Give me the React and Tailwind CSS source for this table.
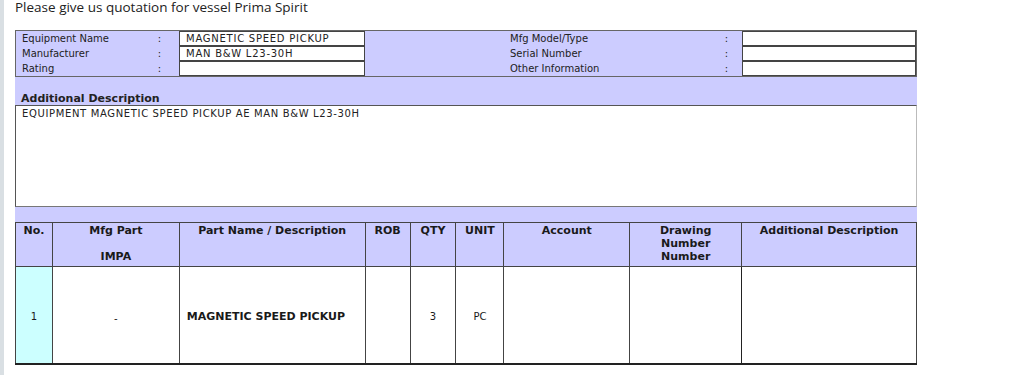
const infoRows = [
  ["Equipment Name", "MAGNETIC SPEED PICKUP", "Mfg Model/Type", ""],
  ["Manufacturer", "MAN B&W L23-30H", "Serial Number", ""],
  ["Rating", "", "Other Information", ""],
];

const cols = [
  { w: "w-[37px]", label: ["No."] },
  { w: "w-[127px]", label: ["Mfg Part", "\u00a0", "IMPA"] },
  { w: "w-[186px]", label: ["Part Name / Description"] },
  { w: "w-[45px]", label: ["ROB"] },
  { w: "w-[46px]", label: ["QTY"] },
  { w: "w-[48px]", label: ["UNIT"] },
  { w: "w-[126px]", label: ["Account"] },
  { w: "w-[112px]", label: ["Drawing", "Number", "Number"] },
  { w: "w-[175px]", label: ["Additional Description"] },
];

const App = () => {
  return (
    <div className="flex min-h-[375px] bg-white text-[#222] font-['DejaVu_Sans',sans-serif]">
      {/* left edge of the frame */}
      <div className="w-[4px] shrink-0 bg-[#d9dfe3]" />

      <div className="pl-[11px] w-[913px]">
        <p className="h-[30px] text-[13.5px] leading-[14px] text-[#222] font-['Open_Sans',sans-serif]">
          Please give us quotation for vessel Prima Spirit
        </p>

        {/* equipment info */}
        <div className="border border-[#666] bg-[#ccccff] text-[10px]">
          {infoRows.map((r, i) => (
            <div key={i} className="flex h-[15px] items-center">
              <div className="w-[163px] flex pl-[6px] pr-[18px]">
                <span className="flex-1">{r[0]}</span>
                <span>:</span>
              </div>
              <div className="w-[186px] h-full bg-white border border-[#444] pl-[6px] leading-[13px] tracking-[0.75px]">
                {r[1]}
              </div>
              <div className="w-[145px]" />
              <div className="w-[232px] flex pr-[14px]">
                <span className="flex-1">{r[2]}</span>
                <span>:</span>
              </div>
              <div className="flex-1 h-full bg-white border border-[#444]">{r[3]}</div>
            </div>
          ))}
        </div>

        {/* additional description */}
        <div className="bg-[#ccccff]">
          <div className="h-[28px] flex items-end pl-[6px] text-[11px] font-bold leading-[13px]">
            Additional Description
          </div>
          <div className="h-[102px] bg-white border border-[#555] border-r-[#bbb] border-b-[#777] pl-[6px] pt-[1px] text-[10px] leading-[13px] tracking-[0.65px]">
            EQUIPMENT MAGNETIC SPEED PICKUP AE MAN B&amp;W L23-30H
          </div>
          <div className="h-[15px]" />
        </div>

        {/* parts table */}
        <table className="border-collapse text-[10px] text-[#1a1a1a]">
          <thead>
            <tr className="bg-[#ccccff] h-[44px]">
              {cols.map((c, i) => (
                <th
                  key={i}
                  className={`${c.w} border border-[#444] align-top pt-[1px] text-[11px] font-bold leading-[13px]`}
                >
                  {c.label.map((l, j) => (
                    <div key={j}>{l}</div>
                  ))}
                </th>
              ))}
            </tr>
          </thead>
          <tbody>
            <tr className="h-[97px]">
              <td className="border border-[#444] border-b-2 border-b-[#222] bg-[#ccffff] text-center pt-[4px]">1</td>
              <td className="border border-[#444] border-b-2 border-b-[#222] text-center pt-[8px]">-</td>
              <td className="border border-[#444] border-b-2 border-b-[#222] pl-[7px] pt-[4px] text-[11px] font-bold">MAGNETIC SPEED PICKUP</td>
              <td className="border border-[#444] border-b-2 border-b-[#222]" />
              <td className="border border-[#444] border-b-2 border-b-[#222] text-center pt-[4px]">3</td>
              <td className="border border-[#444] border-b-2 border-b-[#222] text-center pt-[4px]">PC</td>
              <td className="border border-[#444] border-b-2 border-b-[#222]" />
              <td className="border border-[#222] border-b-2 border-b-[#222]" />
              <td className="border border-[#444] border-b-2 border-b-[#222]" />
            </tr>
          </tbody>
        </table>
      </div>
    </div>
  );
};

export default App;
